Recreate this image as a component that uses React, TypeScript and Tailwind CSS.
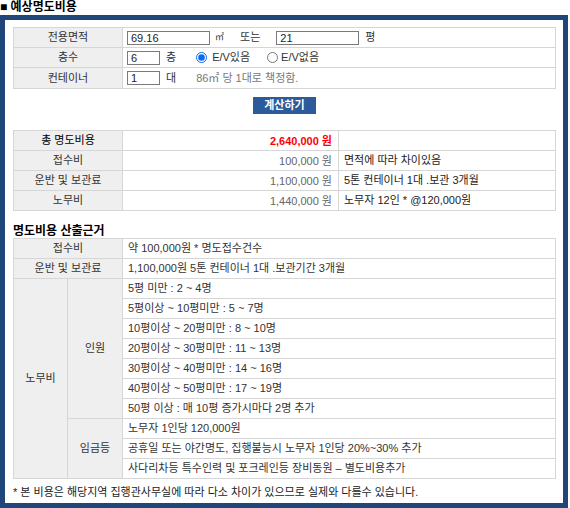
const font = "font-['Liberation_Sans','Noto_Sans_CJK_KR',sans-serif]";

const labelCls = "border border-[#d6d6d6] bg-[#efefef] text-center font-normal text-[#333] p-0";
const cellCls = "border border-[#d6d6d6] p-0";
const inputCls = "h-[14px] border border-[#7b7b7b] bg-white px-[3px] text-[11px] leading-[12px] text-[#222] outline-none";

const costRows = [
  { label: "접수비", value: "100,000 원", note: "면적에 따라 차이있음" },
  { label: "운반 및 보관료", value: "1,100,000 원", note: "5톤 컨테이너 1대 .보관 3개월" },
  { label: "노무비", value: "1,440,000 원", note: "노무자 12인 * @120,000원" },
];

const peopleRows = [
  "5평 미만 : 2 ~ 4명",
  "5평이상 ~ 10평미만 : 5 ~ 7명",
  "10평이상 ~ 20평미만 : 8 ~ 10명",
  "20평이상 ~ 30평미만 : 11 ~ 13명",
  "30평이상 ~ 40평미만 : 14 ~ 16명",
  "40평이상 ~ 50평미만 : 17 ~ 19명",
  "50평 이상 : 매 10평 증가시마다 2명 추가",
];

const wageRows = [
  "노무자 1인당 120,000원",
  "공휴일 또는 야간명도, 집행불능시 노무자 1인당 20%~30% 추가",
  "사다리차등 특수인력 및 포크레인등 장비동원 – 별도비용추가",
];

export default function App() {
  return (
    <div className={`w-[570px] h-[508px] bg-white text-[11px] text-[#333] ${font}`}>
      <h2 className="h-[15px] text-[12px] font-bold leading-[14px] text-black">■ 예상명도비용</h2>

      <div className="w-[568px] h-[493px] border-[5px] border-[#1f4579] pl-[8px] pr-[7px] pt-[7px]">
        {/* 입력 */}
        <table className="w-full table-fixed border-collapse">
          <colgroup>
            <col className="w-[109px]" />
            <col />
          </colgroup>
          <tbody>
            <tr className="h-[20px]">
              <th className={labelCls}>전용면적</th>
              <td className={cellCls}>
                <div className="flex items-center pl-[4px]">
                  <input className={`${inputCls} w-[83px]`} defaultValue="69.16" />
                  <span className="ml-[5px] text-[9px]">㎡</span>
                  <span className="ml-[16px]">또는</span>
                  <input className={`${inputCls} ml-[16px] w-[83px]`} defaultValue="21" />
                  <span className="ml-[6px]">평</span>
                </div>
              </td>
            </tr>
            <tr className="h-[20px]">
              <th className={labelCls}>층수</th>
              <td className={cellCls}>
                <div className="flex items-center pl-[4px]">
                  <input className={`${inputCls} w-[33px]`} defaultValue="6" />
                  <span className="ml-[6px]">층</span>
                  <label className="ml-[20px] flex items-center">
                    <input type="radio" name="ev" defaultChecked className="m-0 h-[11px] w-[11px] accent-[#0a6cf0]" />
                    <span className="ml-[5px]">E/V있음</span>
                  </label>
                  <label className="ml-[17px] flex items-center">
                    <input type="radio" name="ev" className="m-0 h-[11px] w-[11px]" />
                    <span className="ml-[3px]">E/V없음</span>
                  </label>
                </div>
              </td>
            </tr>
            <tr className="h-[21px]">
              <th className={labelCls}>컨테이너</th>
              <td className={cellCls}>
                <div className="flex items-center pl-[4px]">
                  <input className={`${inputCls} w-[33px]`} defaultValue="1" />
                  <span className="ml-[6px]">대</span>
                  <span className="ml-[20px] text-[#777]">86㎡ 당 1대로 책정함.</span>
                </div>
              </td>
            </tr>
          </tbody>
        </table>

        <div className="mt-[8px] flex justify-center">
          <button className="h-[17px] w-[63px] bg-[#2c5b9b] text-[11px] font-bold leading-[17px] text-white">
            계산하기
          </button>
        </div>

        {/* 결과 */}
        <table className="mt-[16px] w-full table-fixed border-collapse">
          <colgroup>
            <col className="w-[109px]" />
            <col className="w-[216px]" />
            <col />
          </colgroup>
          <tbody>
            <tr className="h-[20px]">
              <th className={`${labelCls} font-bold text-black`}>총 명도비용</th>
              <td className={`${cellCls} pr-[6px] pb-[1px] text-right align-bottom font-bold text-[#ff0000]`}>
                2,640,000 원
              </td>
              <td className={cellCls}></td>
            </tr>
            {costRows.map((r) => (
              <tr key={r.label} className="h-[20px]">
                <th className={labelCls}>{r.label}</th>
                <td className={`${cellCls} pr-[6px] pb-[1px] text-right align-bottom text-[#666]`}>{r.value}</td>
                <td className={`${cellCls} pl-[5px] text-[#222]`}>{r.note}</td>
              </tr>
            ))}
          </tbody>
        </table>

        <h3 className="mt-[13px] h-[14px] text-[12px] font-bold leading-[14px] text-black">명도비용 산출근거</h3>

        {/* 산출근거 */}
        <table className="w-full table-fixed border-collapse">
          <colgroup>
            <col className="w-[54px]" />
            <col className="w-[55px]" />
            <col />
          </colgroup>
          <tbody>
            <tr className="h-[20px]">
              <th colSpan={2} className={labelCls}>접수비</th>
              <td className={`${cellCls} pl-[5px]`}>약 100,000원 * 명도접수건수</td>
            </tr>
            <tr className="h-[20px]">
              <th colSpan={2} className={labelCls}>운반 및 보관료</th>
              <td className={`${cellCls} pl-[5px]`}>1,100,000원 5톤 컨테이너 1대 .보관기간 3개월</td>
            </tr>
            {peopleRows.map((t, i) => (
              <tr key={t} className="h-[20px]">
                {i === 0 && (
                  <th rowSpan={10} className={labelCls}>노무비</th>
                )}
                {i === 0 && (
                  <th rowSpan={7} className={labelCls}>인원</th>
                )}
                <td className={`${cellCls} pl-[5px]`}>{t}</td>
              </tr>
            ))}
            {wageRows.map((t, i) => (
              <tr key={t} className="h-[20px]">
                {i === 0 && (
                  <th rowSpan={3} className={labelCls}>임금등</th>
                )}
                <td className={`${cellCls} pl-[5px]`}>{t}</td>
              </tr>
            ))}
          </tbody>
        </table>

        <p className="mt-[6px] leading-[14px] text-[#222]">
          * 본 비용은 해당지역 집행관사무실에 따라 다소 차이가 있으므로 실제와 다를수 있습니다.
        </p>
      </div>
    </div>
  );
}
